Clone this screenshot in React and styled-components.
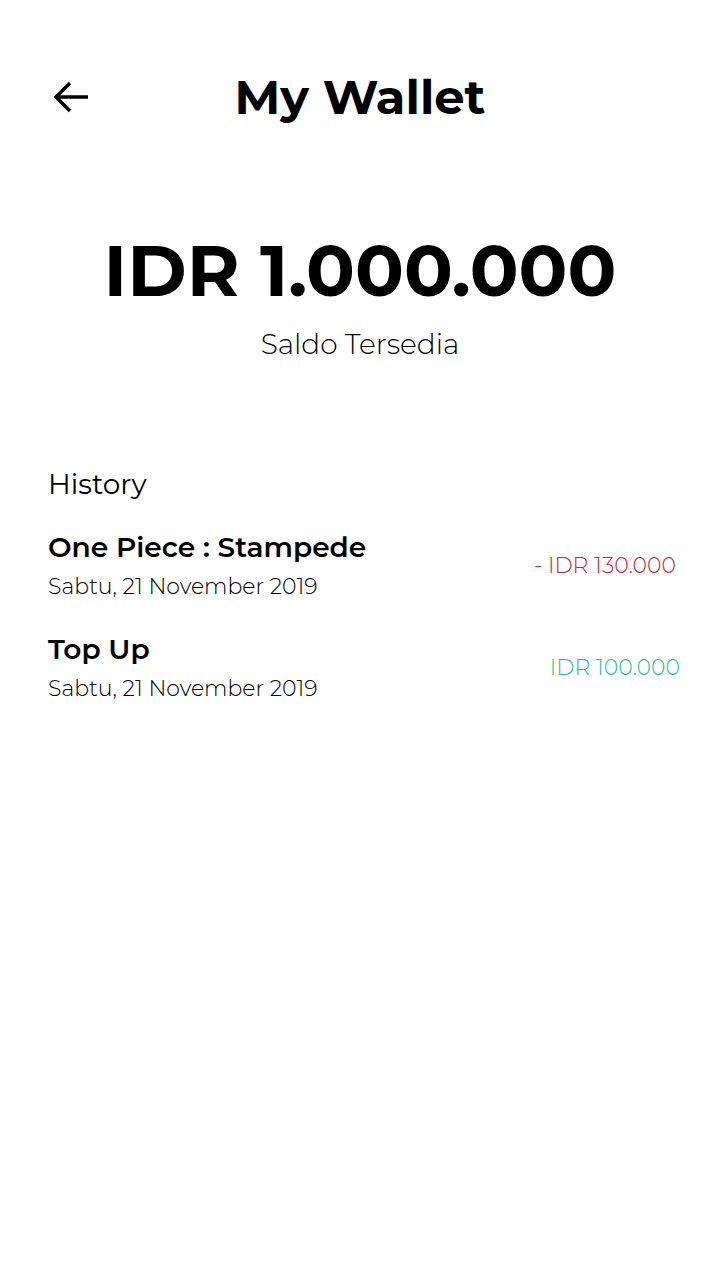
import React from 'react'
import styled, { createGlobalStyle } from "styled-components";

const GlobalStyle = createGlobalStyle`
  body {
    margin: 0;
    background: #ffffff;
    font-family: Montserrat, "Open Sans", "Noto Sans", sans-serif;
    color: #000000;
  }
`;

const history = [
  { title: "One Piece : Stampede", date: "Sabtu, 21 November 2019", amount: "- IDR 130.000", type: "out" },
  { title: "Top Up", date: "Sabtu, 21 November 2019", amount: "IDR 100.000", type: "in" },
];

export default function App() {
  return (
    <Page>
      <GlobalStyle />
      <Header>
        <BackButton aria-label="back">
          <svg width="36" height="32" viewBox="0 0 36 32" fill="none">
            <path d="M34 16H3M16 2L2 16l14 14" stroke="#000" strokeWidth="3.4" strokeLinecap="butt" strokeLinejoin="miter" />
          </svg>
        </BackButton>
        <Title>My Wallet</Title>
      </Header>

      <Balance>
        <Amount>IDR 1.000.000</Amount>
        <BalanceLabel>Saldo Tersedia</BalanceLabel>
      </Balance>

      <HistorySection>
        <SectionTitle>History</SectionTitle>
        <HistoryList>
          {history.map((item) => (
            <HistoryRow key={item.title}>
              <HistoryInfo>
                <ItemTitle>{item.title}</ItemTitle>
                <ItemDate>{item.date}</ItemDate>
              </HistoryInfo>
              <ItemAmount $type={item.type}>{item.amount}</ItemAmount>
            </HistoryRow>
          ))}
        </HistoryList>
      </HistorySection>
    </Page>
  )
}

const Page = styled.div`
  width: 720px;
  height: 1280px;
  box-sizing: border-box;
  padding-top: 67px;
  background: #ffffff;
  overflow: hidden;
`;

const Header = styled.div`
  position: relative;
  display: flex;
  align-items: center;
  justify-content: center;
  height: 60px;
`;

const BackButton = styled.button`
  position: absolute;
  left: 54px;
  top: 50%;
  transform: translateY(-50%);
  display: flex;
  padding: 0;
  border: none;
  background: none;
  cursor: pointer;
`;

const Title = styled.h1`
  margin: 0;
  font-size: 48px;
  font-weight: 700;
`;

const Balance = styled.div`
  display: flex;
  flex-direction: column;
  align-items: center;
  margin-top: 107px;
`;

const Amount = styled.div`
  font-size: 72px;
  font-weight: 700;
  line-height: 1;
`;

const BalanceLabel = styled.div`
  margin-top: 21px;
  font-size: 28px;
  font-weight: 300;
`;

const HistorySection = styled.div`
  padding: 0 40px 0 48px;
  margin-top: 106px;
`;

const SectionTitle = styled.h2`
  margin: 0;
  font-size: 28px;
  font-weight: 400;
`;

const HistoryList = styled.div`
  display: flex;
  flex-direction: column;
  gap: 33px;
  margin-top: 30px;
`;

const HistoryRow = styled.div`
  display: flex;
  align-items: center;
  justify-content: space-between;
`;

const HistoryInfo = styled.div`
  display: flex;
  flex-direction: column;
  gap: 9px;
`;

const ItemTitle = styled.div`
  font-size: 28px;
  font-weight: 600;
  line-height: 1.2;
`;

const ItemDate = styled.div`
  font-size: 22px;
  font-weight: 300;
  line-height: 1.2;
`;

const ItemAmount = styled.div`
  font-size: 22px;
  font-weight: 300;
  color: ${(p) => (p.$type === "out" ? "#c8232f" : "#22bf98")};
  margin-right: ${(p) => (p.$type === "out" ? "4px" : "0")};
`;
